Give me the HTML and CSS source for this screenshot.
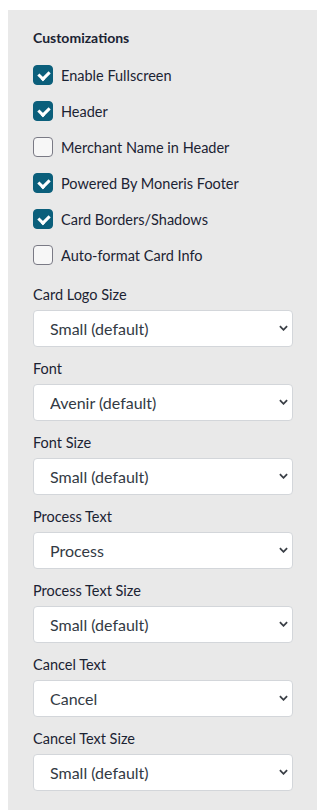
FILE: index.html
```html
<!DOCTYPE html>
<html lang="en">
<head>
    <meta charset="UTF-8">
    <meta name="viewport" content="width=device-width, initial-scale=1.0">
    <title>Customizations</title>
    <link rel="stylesheet" href="styles.css">
</head>
<body>
    <div class="panel">
        <h3 class="panel-title">Customizations</h3>

        <div class="checks">
            <label class="check"><input type="checkbox" checked><span>Enable Fullscreen</span></label>
            <label class="check"><input type="checkbox" checked><span>Header</span></label>
            <label class="check"><input type="checkbox"><span>Merchant Name in Header</span></label>
            <label class="check"><input type="checkbox" checked><span>Powered By Moneris Footer</span></label>
            <label class="check"><input type="checkbox" checked><span>Card Borders/Shadows</span></label>
            <label class="check"><input type="checkbox"><span>Auto-format Card Info</span></label>
        </div>

        <div class="field">
            <label>Card Logo Size</label>
            <div class="select-wrap">
                <select><option>Small (default)</option><option>Medium</option><option>Large</option></select>
                <svg class="chevron" viewBox="0 0 10 6"><path d="M1 1l4 4 4-4"/></svg>
            </div>
        </div>

        <div class="field">
            <label>Font</label>
            <div class="select-wrap">
                <select><option>Avenir (default)</option><option>Arial</option></select>
                <svg class="chevron" viewBox="0 0 10 6"><path d="M1 1l4 4 4-4"/></svg>
            </div>
        </div>

        <div class="field">
            <label>Font Size</label>
            <div class="select-wrap">
                <select><option>Small (default)</option><option>Medium</option><option>Large</option></select>
                <svg class="chevron" viewBox="0 0 10 6"><path d="M1 1l4 4 4-4"/></svg>
            </div>
        </div>

        <div class="field">
            <label>Process Text</label>
            <div class="select-wrap">
                <select><option>Process</option><option>Pay</option></select>
                <svg class="chevron" viewBox="0 0 10 6"><path d="M1 1l4 4 4-4"/></svg>
            </div>
        </div>

        <div class="field">
            <label>Process Text Size</label>
            <div class="select-wrap">
                <select><option>Small (default)</option><option>Medium</option><option>Large</option></select>
                <svg class="chevron" viewBox="0 0 10 6"><path d="M1 1l4 4 4-4"/></svg>
            </div>
        </div>

        <div class="field">
            <label>Cancel Text</label>
            <div class="select-wrap">
                <select><option>Cancel</option><option>Back</option></select>
                <svg class="chevron" viewBox="0 0 10 6"><path d="M1 1l4 4 4-4"/></svg>
            </div>
        </div>

        <div class="field">
            <label>Cancel Text Size</label>
            <div class="select-wrap">
                <select><option>Small (default)</option><option>Medium</option><option>Large</option></select>
                <svg class="chevron" viewBox="0 0 10 6"><path d="M1 1l4 4 4-4"/></svg>
            </div>
        </div>
    </div>
</body>
</html>
```

FILE: styles.css
```css
body {
    margin: 10px 0 0 8px;
    font-family: Lato, "Open Sans", sans-serif;
    color: #1b2333;
    background-color: white;
}
.panel {
    background-color: #e9e9e9;
    padding: 18px 25px 18px 25px;
    min-height: 762px;
}
.panel-title {
    margin: 0;
    font-size: 14px;
    line-height: 20px;
    font-weight: bold;
}
.checks {
    display: flex;
    flex-direction: column;
    margin-top: 9px;
    margin-bottom: 12px;
}
.check {
    display: flex;
    align-items: center;
    gap: 8px;
    height: 36px;
    font-size: 14.5px;
    cursor: pointer;
}
.check input {
    appearance: none;
    -webkit-appearance: none;
    margin: 0;
    width: 20px;
    height: 20px;
    border: 1px solid #7a7a85;
    border-radius: 4px;
    background-color: #f7f7f7;
    position: relative;
}
.check input:checked {
    background-color: #0b5f7b;
    border-color: #0b5f7b;
}
.check input:checked::after {
    content: "";
    position: absolute;
    left: 6px;
    top: 3px;
    width: 5px;
    height: 8px;
    border: solid white;
    border-width: 0 3px 3px 0;
    transform: rotate(45deg);
}
.field {
    margin-bottom: 12px;
}
.field label {
    display: block;
    font-size: 14.5px;
    line-height: 20px;
    margin-bottom: 5px;
}
.select-wrap {
    position: relative;
    width: 260px;
}
.select-wrap select {
    appearance: none;
    -webkit-appearance: none;
    width: 100%;
    height: 37px;
    padding: 0 30px 0 16px;
    border: 1px solid #d3d6da;
    border-radius: 4px;
    background-color: white;
    font-family: Lato, "Open Sans", sans-serif;
    font-size: 16px;
    color: #333a44;
}
.chevron {
    position: absolute;
    right: 5px;
    top: 15px;
    width: 9px;
    height: 6px;
    fill: none;
    stroke: #3a3f46;
    stroke-width: 2;
    pointer-events: none;
}
```
